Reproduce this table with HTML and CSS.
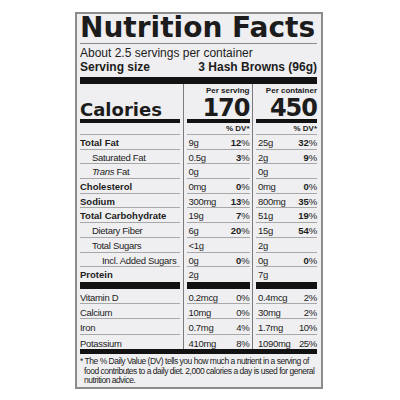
FILE: index.html
```html
<!DOCTYPE html>
<html lang="en">
<head>
  <meta charset="UTF-8">
  <title>Nutrition Facts - Hash Browns</title>
  <link rel="stylesheet" href="styles.css">
</head>
<body>
  <div class="label">
    <h1 class="title">Nutrition Facts</h1>
    <p class="servings">About 2.5 servings per container</p>
    <div class="serving-size">
      <span>Serving size</span>
      <span>3 Hash Browns (96g)</span>
    </div>
    <div class="bar-thick"></div>

    <div class="table">
      <div class="row cal-row">
        <div class="cell cal-name">Calories</div>
        <div class="cell cal-val"><span class="per">Per serving</span><span class="kcal">170</span></div>
        <div class="cell cal-val"><span class="per">Per container</span><span class="kcal">450</span></div>
      </div>
      <div class="row dv-row">
        <div class="cell"></div>
        <div class="cell dv">% DV*</div>
        <div class="cell dv">% DV*</div>
      </div>

      <div class="row">
        <div class="cell name bold">Total Fat</div>
        <div class="cell val"><span>9g</span><span><b>12</b>%</span></div>
        <div class="cell val"><span>25g</span><span><b>32</b>%</span></div>
      </div>
      <div class="row">
        <div class="cell name i1">Saturated Fat</div>
        <div class="cell val"><span>0.5g</span><span><b>3</b>%</span></div>
        <div class="cell val"><span>2g</span><span><b>9</b>%</span></div>
      </div>
      <div class="row">
        <div class="cell name i1"><i>Trans</i> Fat</div>
        <div class="cell val"><span>0g</span></div>
        <div class="cell val"><span>0g</span></div>
      </div>
      <div class="row">
        <div class="cell name bold">Cholesterol</div>
        <div class="cell val"><span>0mg</span><span><b>0</b>%</span></div>
        <div class="cell val"><span>0mg</span><span><b>0</b>%</span></div>
      </div>
      <div class="row">
        <div class="cell name bold">Sodium</div>
        <div class="cell val"><span>300mg</span><span><b>13</b>%</span></div>
        <div class="cell val"><span>800mg</span><span><b>35</b>%</span></div>
      </div>
      <div class="row">
        <div class="cell name bold">Total Carbohydrate</div>
        <div class="cell val"><span>19g</span><span><b>7</b>%</span></div>
        <div class="cell val"><span>51g</span><span><b>19</b>%</span></div>
      </div>
      <div class="row">
        <div class="cell name i1">Dietary Fiber</div>
        <div class="cell val"><span>6g</span><span><b>20</b>%</span></div>
        <div class="cell val"><span>15g</span><span><b>54</b>%</span></div>
      </div>
      <div class="row">
        <div class="cell name i1">Total Sugars</div>
        <div class="cell val"><span>&lt;1g</span></div>
        <div class="cell val"><span>2g</span></div>
      </div>
      <div class="row">
        <div class="cell name i2">Incl. Added Sugars</div>
        <div class="cell val"><span>0g</span><span><b>0</b>%</span></div>
        <div class="cell val"><span>0g</span><span><b>0</b>%</span></div>
      </div>
      <div class="row protein">
        <div class="cell name bold">Protein</div>
        <div class="cell val"><span>2g</span></div>
        <div class="cell val"><span>7g</span></div>
      </div>

      <div class="row vit">
        <div class="cell name">Vitamin D</div>
        <div class="cell val"><span>0.2mcg</span><span>0%</span></div>
        <div class="cell val"><span>0.4mcg</span><span>2%</span></div>
      </div>
      <div class="row vit">
        <div class="cell name">Calcium</div>
        <div class="cell val"><span>10mg</span><span>0%</span></div>
        <div class="cell val"><span>30mg</span><span>2%</span></div>
      </div>
      <div class="row vit">
        <div class="cell name">Iron</div>
        <div class="cell val"><span>0.7mg</span><span>4%</span></div>
        <div class="cell val"><span>1.7mg</span><span>10%</span></div>
      </div>
      <div class="row vit last">
        <div class="cell name">Potassium</div>
        <div class="cell val"><span>410mg</span><span>8%</span></div>
        <div class="cell val"><span>1090mg</span><span>25%</span></div>
      </div>
    </div>
    <div class="bar-bottom"></div>

    <p class="note">* The % Daily Value (DV) tells you how much a nutrient in a serving of food contributes to a daily diet. 2,000 calories a day is used for general nutrition advice.</p>
  </div>
</body>
</html>
```

FILE: styles.css
```css
body {
  margin: 0;
  background-color: #ffffff;
  font-family: "Liberation Sans", Arial, sans-serif;
  color: #1c1c1c;
}

.label {
  width: 237px;
  margin: 12px 0 0 75px;
  padding: 0 4px 0 3px;
  border: 2px solid #8c8c8c;
  background-color: #efeff1;
}

.title {
  margin: 0;
  padding-bottom: 2px;
  border-bottom: 1px solid #8a8a8a;
  font-family: "DejaVu Sans", sans-serif;
  font-weight: bold;
  font-size: 28px;
  line-height: 27px;
  white-space: nowrap;
}

.servings {
  margin: 2px 0 0;
  font-size: 12px;
  line-height: 14px;
}

.serving-size {
  display: flex;
  justify-content: space-between;
  font-size: 12px;
  font-weight: bold;
  line-height: 14px;
}

.bar-thick {
  height: 7px;
  margin-top: 3px;
  background-color: #121212;
}

/* vertical dividers between the three columns */
.table {
  background-image: linear-gradient(to right,
    transparent 103px, #7a7a7a 103px, #7a7a7a 104px, transparent 104px,
    transparent 172px, #7a7a7a 172px, #7a7a7a 173px, transparent 173px);
}

.row {
  display: grid;
  grid-template-columns: 100px 63px 61px;
  column-gap: 6.5px;
}

.cell {
  height: 11.7px;
  padding-top: 2px;
  border-bottom: 1px solid #a8a8a8;
  font-size: 9.5px;
  line-height: 11.7px;
  letter-spacing: -0.3px;
  white-space: nowrap;
}

.cal-row .cell {
  height: 35px;
  padding-top: 0;
  border-bottom: 4px solid #121212;
  display: flex;
  flex-direction: column;
  justify-content: space-between;
  align-items: flex-end;
  letter-spacing: 0;
}

.cal-row .cal-name {
  justify-content: flex-end;
  align-items: flex-start;
  font-family: "DejaVu Sans", sans-serif;
  font-weight: bold;
  font-size: 18px;
  line-height: 19px;
}

.per {
  padding-top: 2px;
  font-size: 8px;
  font-weight: bold;
  line-height: 9px;
}

.kcal {
  font-family: "DejaVu Sans", sans-serif;
  font-weight: bold;
  font-size: 24px;
  line-height: 22px;
  letter-spacing: -1px;
}

.dv-row .cell {
  height: 11px;
  padding-top: 0;
  font-size: 8px;
  font-weight: bold;
  line-height: 11px;
  text-align: right;
  letter-spacing: 0;
}

.bold {
  font-weight: bold;
  letter-spacing: 0;
}

.i1 {
  padding-left: 12px;
}

.i2 {
  padding-left: 22px;
}

.val {
  display: flex;
  justify-content: space-between;
  padding-left: 2px;
}

.val b {
  letter-spacing: 0;
}

.protein .cell {
  height: 12.7px;
  border-bottom: 7px solid #121212;
}

.vit .cell {
  height: 11.3px;
  padding-top: 3px;
  line-height: 11.3px;
}

.vit.last .cell {
  border-bottom: none;
}

.bar-bottom {
  height: 5px;
  background-color: #121212;
}

.note {
  margin: 0;
  padding: 3px 0 1px 4px;
  text-indent: -4px;
  font-size: 8.5px;
  line-height: 9.5px;
  letter-spacing: -0.48px;
}
```
